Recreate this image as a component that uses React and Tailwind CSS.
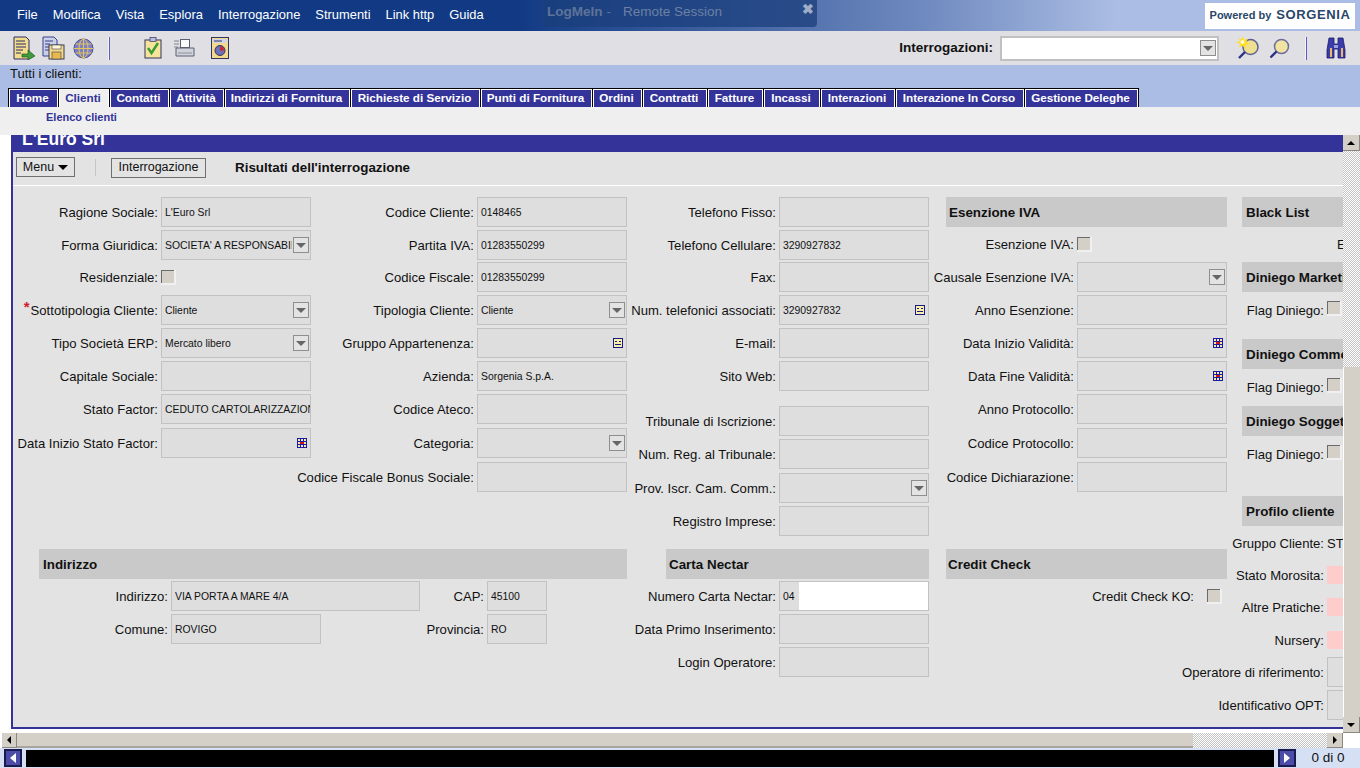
import React from "react";

const menus = ["File", "Modifica", "Vista", "Esplora", "Interrogazione", "Strumenti", "Link http", "Guida"];

const tabs = [
  { label: "Home", w: "w-[50px]" },
  { label: "Clienti", w: "w-[51px]", active: true },
  { label: "Contatti", w: "w-[60px]" },
  { label: "Attività", w: "w-[55px]" },
  { label: "Indirizzi di Fornitura", w: "w-[126px]" },
  { label: "Richieste di Servizio", w: "w-[130px]" },
  { label: "Punti di Fornitura", w: "w-[112px]" },
  { label: "Ordini", w: "w-[50px]" },
  { label: "Contratti", w: "w-[65px]" },
  { label: "Fatture", w: "w-[56px]" },
  { label: "Incassi", w: "w-[57px]" },
  { label: "Interazioni", w: "w-[75px]" },
  { label: "Interazione In Corso", w: "w-[129px]" },
  { label: "Gestione Deleghe", w: "w-[115px] border-r" },
];

const col1 = [
  { label: "Ragione Sociale:", value: "L'Euro Srl", h: "h-[33px]" },
  { label: "Forma Giuridica:", value: "SOCIETA' A RESPONSABILITA' LIMITATA", type: "select", h: "h-[32px]" },
  { label: "Residenziale:", type: "check", h: "h-[33px]" },
  { label: "Sottotipologia Cliente:", value: "Cliente", type: "select", required: true, h: "h-[33px]" },
  { label: "Tipo Società ERP:", value: "Mercato libero", type: "select", h: "h-[33px]" },
  { label: "Capitale Sociale:", h: "h-[33px]" },
  { label: "Stato Factor:", value: "CEDUTO CARTOLARIZZAZIONE", h: "h-[34px]" },
  { label: "Data Inizio Stato Factor:", type: "date", h: "h-[34px]" },
];

const col2 = [
  { label: "Codice Cliente:", value: "0148465", h: "h-[33px]" },
  { label: "Partita IVA:", value: "01283550299", h: "h-[32px]" },
  { label: "Codice Fiscale:", value: "01283550299", h: "h-[33px]" },
  { label: "Tipologia Cliente:", value: "Cliente", type: "select", h: "h-[33px]" },
  { label: "Gruppo Appartenenza:", type: "lookup", h: "h-[33px]" },
  { label: "Azienda:", value: "Sorgenia S.p.A.", h: "h-[33px]" },
  { label: "Codice Ateco:", h: "h-[34px]" },
  { label: "Categoria:", type: "select", h: "h-[34px]" },
  { label: "Codice Fiscale Bonus Sociale:", h: "h-[34px]" },
];

const col3 = [
  { label: "Telefono Fisso:", h: "h-[33px]" },
  { label: "Telefono Cellulare:", value: "3290927832", h: "h-[32px]" },
  { label: "Fax:", h: "h-[33px]" },
  { label: "Num. telefonici associati:", value: "3290927832", type: "lookup", h: "h-[33px]" },
  { label: "E-mail:", h: "h-[33px]" },
  { label: "Sito Web:", h: "h-[45px]" },
  { label: "Tribunale di Iscrizione:", h: "h-[33px]" },
  { label: "Num. Reg. al Tribunale:", h: "h-[34px]" },
  { label: "Prov. Iscr. Cam. Comm.:", type: "select", h: "h-[33px]" },
  { label: "Registro Imprese:", h: "h-[33px]" },
];

const col4 = [
  { label: "Esenzione IVA:", type: "check", h: "h-[33px]" },
  { label: "Causale Esenzione IVA:", type: "select", h: "h-[33px]" },
  { label: "Anno Esenzione:", h: "h-[33px]" },
  { label: "Data Inizio Validità:", type: "date", h: "h-[33px]" },
  { label: "Data Fine Validità:", type: "date", h: "h-[33px]" },
  { label: "Anno Protocollo:", h: "h-[34px]" },
  { label: "Codice Protocollo:", h: "h-[34px]" },
  { label: "Codice Dichiarazione:", h: "h-[33px]" },
];

const ArrowBox = () => (
  <span className="flex h-[16px] w-[16px] shrink-0 items-center justify-center border border-[#8e8e8e] bg-[#e3e3e3]">
    <span className="h-0 w-0 border-x-[5px] border-t-[5px] border-x-transparent border-t-[#666]" />
  </span>
);

const CalendarIcon = () => (
  <svg width="10" height="10" viewBox="0 0 10 10" className="shrink-0">
    <rect width="10" height="10" fill="#1a1aa8" />
    <path d="M1 1h2v2H1zM4 1h2v2H4zM7 1h2v2H7zM1 4h2v2H1zM7 4h2v2H7zM1 7h2v2H1zM4 7h2v2H4zM7 7h2v2H7z" fill="#f4e9a8" />
    <rect x="3" y="4" width="4" height="2" fill="#d4141c" />
  </svg>
);

const LookupIcon = () => (
  <svg width="10" height="10" viewBox="0 0 10 10" className="shrink-0">
    <rect x="0.5" y="0.5" width="9" height="9" fill="#f6efb0" stroke="#1a1a80" />
    <path d="M2 3h2v1H2zM6 3h2v1H6zM2 6h6v1H2z" fill="#1a1a80" />
  </svg>
);

const CheckBox = () => (
  <span className="block h-[15px] w-[15px] bg-[#f0f0f0]">
    <span className="block h-[13px] w-[13px] border-l border-t border-[#6b6b6b] bg-[#d4d0c8]" />
  </span>
);

const Field = ({ value, type, w = "w-[150px]" }) => (
  <div className={`flex h-[30px] shrink-0 items-center overflow-hidden border border-[#c2c2c2] bg-[#dedede] pl-[3px] pt-[1px] ${w}`}>
    <span className="min-w-0 flex-1 overflow-hidden whitespace-nowrap text-[10.4px] text-[#111]">{value}</span>
    {type === "select" && <span className="ml-[1px] mr-[1px] mt-[-1px]"><ArrowBox /></span>}
    {type === "date" && <span className="mr-[3px] mt-[-1px]"><CalendarIcon /></span>}
    {type === "lookup" && <span className="mr-[3px] mt-[-1px]"><LookupIcon /></span>}
  </div>
);

const Label = ({ children, w, required }) => (
  <div className={`flex h-[30px] shrink-0 items-center justify-end whitespace-nowrap pt-[1px] text-[#111] ${w}`}>
    {required && <span className="mr-[1px] mt-[-8px] text-[15px] font-bold leading-none text-[#d01c2c]">*</span>}
    {children}
  </div>
);

const Row = ({ item, w }) => (
  <div className={`flex gap-[3px] ${item.h}`}>
    <Label w={w} required={item.required}>{item.label}</Label>
    {item.type === "check" ? (
      <div className="pt-[8px]"><CheckBox /></div>
    ) : (
      <Field value={item.value} type={item.type} />
    )}
  </div>
);

const SectionHead = ({ children, className, pl = "pl-[3px]" }) => (
  <div className={`flex h-[30px] shrink-0 items-center overflow-hidden whitespace-nowrap bg-[#c9c9c9] pt-[2px] text-[13.4px] font-bold text-[#111] ${pl} ${className}`}>
    {children}
  </div>
);

const DocArrowIcon = () => (
  <svg width="24" height="24" viewBox="0 0 24 24">
    <path d="M2 1h12l3 3v19H2z" fill="#f3dc8c" stroke="#2a2a6a" />
    <path d="M4 5h9M4 8h10M4 11h10M4 14h7M4 17h5" stroke="#2a2a6a" />
    <path d="M10 18h6v-4l7 6-7 4v-3h-6z" fill="#3f9a3c" stroke="#1d5c22" strokeWidth="0.7" />
  </svg>
);

const DocsFloppyIcon = () => (
  <svg width="23" height="24" viewBox="0 0 23 24">
    <path d="M1 1h11l3 3v16H1z" fill="#c9d0ea" stroke="#3a3f8a" />
    <path d="M3 5h8M3 8h5M3 11h4M3 14h4" stroke="#3a3f8a" />
    <rect x="7" y="9" width="15" height="14" fill="#f2d98c" stroke="#3a3a50" />
    <rect x="10" y="9" width="9" height="4" fill="#fff8d8" stroke="#3a3a50" strokeWidth="0.6" />
    <rect x="10" y="16" width="9" height="7" fill="#e9b84f" stroke="#3a3a50" strokeWidth="0.6" />
  </svg>
);

const GlobeIcon = () => (
  <svg width="21" height="21" viewBox="0 0 21 21">
    <circle cx="10.5" cy="10.5" r="9.5" fill="#7d80c4" stroke="#4a4c94" />
    <ellipse cx="10.5" cy="10.5" rx="4.5" ry="9.5" fill="none" stroke="#e3c65a" />
    <path d="M10.5 1v19M1 10.5h19M2.5 6h16M2.5 15h16" stroke="#e3c65a" fill="none" />
  </svg>
);

const ClipboardIcon = () => (
  <svg width="18" height="22" viewBox="0 0 18 22">
    <rect x="1" y="3" width="16" height="18" fill="#f6e49b" stroke="#33335f" />
    <rect x="6" y="0.5" width="6" height="4" fill="#b9bde0" stroke="#33335f" strokeWidth="0.7" />
    <path d="M4 11l3.5 5L14 6" fill="none" stroke="#3a9a34" strokeWidth="2.4" />
  </svg>
);

const PrinterIcon = () => (
  <svg width="22" height="20" viewBox="0 0 22 20">
    <path d="M1 3h5M1 6h5M1 9h4" stroke="#a0a4ac" strokeWidth="1.4" />
    <rect x="7.5" y="1.5" width="9" height="8" fill="#fafafa" stroke="#5a6072" />
    <path d="M3 10h18v8H3z" fill="#d0d4da" stroke="#5a6072" />
    <path d="M5 15h14" stroke="#8a8f9c" />
  </svg>
);

const CalendarDocIcon = () => (
  <svg width="18" height="22" viewBox="0 0 18 22">
    <rect x="0.5" y="0.5" width="17" height="21" fill="#f2d98c" stroke="#33335f" />
    <rect x="2" y="2" width="14" height="4" fill="#cfd3ec" />
    <path d="M3 4h8" stroke="#33335f" />
    <circle cx="9" cy="13.5" r="5" fill="#6d6fb8" stroke="#33335f" />
    <path d="M9 13.5V9.5a4 4 0 014 4z" fill="#cf2230" />
  </svg>
);

const NewSearchIcon = () => (
  <svg width="24" height="24" viewBox="0 0 24 24">
    <circle cx="14.5" cy="11" r="7.5" fill="#efe08f" stroke="#5d6096" strokeWidth="1.5" />
    <path d="M9 16l-6 6" stroke="#2c2f86" strokeWidth="2.4" />
    <path d="M6.5 0l1.6 4 3.9-1.6L10.3 6l3.2 2.2-3.9.4-.6 3.9-2.5-3-3.3 2 .9-3.8L0 6.5l3.8-1.3-.7-3.8 2.4 2.3z" fill="#ffdf20" />
    <circle cx="6.5" cy="6" r="2" fill="#fffbe0" />
  </svg>
);

const SearchIcon = () => (
  <svg width="21" height="21" viewBox="0 0 21 21">
    <circle cx="12.5" cy="8.5" r="7" fill="#f0e4a0" stroke="#6a6da0" strokeWidth="1.5" />
    <path d="M7.5 13.5L1.5 19.5" stroke="#2c2f86" strokeWidth="2.4" />
  </svg>
);

const BinocularsIcon = () => (
  <svg width="20" height="23" viewBox="0 0 20 23">
    <path d="M3 1h5v6h4V1h5l2 12v8h-7v-9H8v9H1v-8z" fill="#3a3ca8" stroke="#1b1b70" strokeWidth="0.8" />
    <path d="M4 11h2v9H4zM15 11h2v9h-2z" fill="#e8b868" />
    <path d="M8 8h4v3H8z" fill="#9ea2dc" />
  </svg>
);

const ToolbarSep = ({ className }) => (
  <span className={`h-[23px] w-[2px] shrink-0 border-r border-[#5a5cc0] bg-[#f4f4f8] ${className}`} />
);

const ScrollBtn = ({ dir, className }) => (
  <div className={`flex shrink-0 items-center justify-center border-r border-b border-[#8a8780] bg-[#d4d0c8] ${className}`}>
    {dir === "up" && <span className="h-0 w-0 border-x-[4px] border-b-[4px] border-x-transparent border-b-black" />}
    {dir === "down" && <span className="h-0 w-0 border-x-[4px] border-t-[4px] border-x-transparent border-t-black" />}
    {dir === "left" && <span className="h-0 w-0 border-y-[4px] border-r-[4px] border-y-transparent border-r-black" />}
    {dir === "right" && <span className="h-0 w-0 border-y-[4px] border-l-[4px] border-y-transparent border-l-black" />}
  </div>
);

const PageBtn = ({ dir }) => (
  <div className="flex h-[18px] w-[18px] shrink-0 items-center justify-center border-2 border-[#1a1a50] bg-[#4a4ca8]">
    {dir === "left" ? (
      <span className="h-0 w-0 border-y-[5px] border-r-[6px] border-y-transparent border-r-white" />
    ) : (
      <span className="h-0 w-0 border-y-[5px] border-l-[6px] border-y-transparent border-l-white" />
    )}
  </div>
);

const dither = "bg-[repeating-conic-gradient(#c4c4c4_0_25%,#ffffff_0_50%)] bg-[length:2px_2px]";

export default function App() {
  return (
    <div className="h-[768px] w-[1360px] overflow-hidden bg-white font-['Liberation_Sans',Arial,sans-serif] text-[13.1px]">
      {/* barra menu */}
      <div className="relative flex h-[31px] items-center justify-between bg-[linear-gradient(90deg,#123a84_0%,#123a84_38%,#6f8abf_68%,#abbde4_82%,#abbde4_100%)] pl-[17px] pr-[5px]">
        <div className="flex gap-[15px] pb-[1px] text-[12.9px] text-white">
          {menus.map((m) => (
            <span key={m}>{m}</span>
          ))}
        </div>
        <div className="flex h-[26px] w-[150px] items-center justify-center gap-[5px] whitespace-nowrap bg-white pb-[1px]">
          <span className="text-[11px] font-bold text-[#2a4668]">Powered by</span>
          <span className="text-[13px] font-bold tracking-[0.6px] text-[#2a4668]">SORGENIA</span>
        </div>
        <div className="absolute left-[543px] top-0 flex h-[27px] w-[274px] items-center rounded-b-[4px] bg-[#1b3f7c]/75 pb-[2px] pl-[4px] text-[13.5px]">
          <span className="font-bold text-[#5f7399]">LogMeIn</span>
          <span className="ml-[4px] text-[#5f7399]">-</span>
          <span className="ml-[12px] text-[#6d80a4]">Remote Session</span>
          <span className="absolute right-[3px] top-[-1px] text-[14px] font-bold text-[#9fadc6]">✖</span>
        </div>
      </div>

      {/* barra strumenti */}
      <div className="flex h-[34px] items-center bg-[#e0dfe4] pl-[12px]">
        <DocArrowIcon />
        <span className="ml-[6px]"><DocsFloppyIcon /></span>
        <span className="ml-[8px]"><GlobeIcon /></span>
        <ToolbarSep className="ml-[14px]" />
        <span className="ml-[34px]"><ClipboardIcon /></span>
        <span className="ml-[11px]"><PrinterIcon /></span>
        <span className="ml-[16px]"><CalendarDocIcon /></span>
        <span className="ml-auto whitespace-nowrap text-[13.5px] font-bold text-[#111]">Interrogazioni:</span>
        <div className="ml-[7px] flex h-[25px] w-[219px] items-center justify-end border-2 border-[#c0c0c0] bg-white pr-[1px]">
          <ArrowBox />
        </div>
        <span className="ml-[17px]"><NewSearchIcon /></span>
        <span className="ml-[9px]"><SearchIcon /></span>
        <ToolbarSep className="ml-[15px]" />
        <span className="ml-[19px] mr-[14px]"><BinocularsIcon /></span>
      </div>

      {/* schede */}
      <div className="flex h-[42px] flex-col justify-between bg-[#abbde4]">
        <div className="pl-[10px] pt-[1px] text-[13px] leading-[16px] text-[#111]">Tutti i clienti:</div>
        <div className="flex pl-[8px]">
          {tabs.map((t) => (
            <div key={t.label} className={`h-[19px] shrink-0 border-l border-t border-black ${t.w}`}>
              <div
                className={`flex h-[18px] items-center justify-center whitespace-nowrap border-x border-t border-white pb-[1px] pr-[2px] text-[11.7px] font-bold ${
                  t.active ? "bg-[#efefef] text-[#333399]" : "bg-[#333399] text-white"
                }`}
              >
                {t.label}
              </div>
            </div>
          ))}
        </div>
      </div>
      <div className="h-[28px] bg-[#efefef] pl-[46px] pt-[3px] text-[11px] font-bold leading-[14px] text-[#333399]">Elenco clienti</div>

      <div className="flex h-[598px]">
        <div className="w-[1343px] shrink-0 overflow-hidden pl-[11px]">
          <div className="h-[594px] w-[1340px] border-b-2 border-l-2 border-[#333399] bg-[#e3e3e3]">
            <div className="h-[17px] overflow-hidden bg-[#333399] pl-[9px] text-[17.5px] font-bold leading-[9px] text-white">L'Euro Srl</div>

            {/* barra azioni */}
            <div className="flex h-[34px] items-center border-b border-white pb-[3px] pl-[3px] text-[12.5px] text-[#111]">
              <div className="flex h-[20px] w-[59px] items-center justify-center gap-[4px] border border-[#6f6f6f]">
                Menu
                <span className="h-0 w-0 border-x-[5px] border-t-[5px] border-x-transparent border-t-black" />
              </div>
              <span className="ml-[20px] h-[17px] w-px bg-[#c5c5c5]" />
              <div className="ml-[15px] mt-[1px] flex h-[20px] w-[95px] items-center justify-center border border-[#6f6f6f]">Interrogazione</div>
              <span className="ml-[29px] mt-[3px] text-[13.4px] font-bold">Risultati dell'interrogazione</span>
            </div>

            <div className="flex">
              <div className="w-[1229px] shrink-0">
                {/* colonne superiori */}
                <div className="flex h-[363px] pt-[11px]">
                  <div className="w-[298px] shrink-0">
                    {col1.map((it) => <Row key={it.label} item={it} w="w-[145px]" />)}
                  </div>
                  <div className="w-[316px] shrink-0">
                    {col2.map((it) => <Row key={it.label} item={it} w="w-[163px]" />)}
                  </div>
                  <div className="w-[302px] shrink-0">
                    {col3.map((it) => <Row key={it.label} item={it} w="w-[149px]" />)}
                  </div>
                  <div className="w-[298px] shrink-0">
                    <SectionHead className="ml-[17px] mb-[2px] w-[281px]">Esenzione IVA</SectionHead>
                    {col4.map((it) => <Row key={it.label} item={it} w="w-[145px]" />)}
                  </div>
                </div>

                {/* sezioni inferiori */}
                <div className="flex">
                  <div className="w-[614px] shrink-0">
                    <SectionHead pl="pl-[4px]" className="ml-[26px] mb-[2px] w-[588px]">Indirizzo</SectionHead>
                    <div className="flex h-[33px] gap-[3px]">
                      <Label w="w-[155px]">Indirizzo:</Label>
                      <Field value="VIA PORTA A MARE 4/A" w="w-[249px]" />
                      <Label w="w-[61px]">CAP:</Label>
                      <Field value="45100" w="w-[60px]" />
                    </div>
                    <div className="flex h-[33px] gap-[3px]">
                      <Label w="w-[155px]">Comune:</Label>
                      <Field value="ROVIGO" />
                      <Label w="w-[160px]">Provincia:</Label>
                      <Field value="RO" w="w-[60px]" />
                    </div>
                  </div>
                  <div className="w-[302px] shrink-0">
                    <SectionHead className="ml-[39px] mb-[2px] w-[263px]">Carta Nectar</SectionHead>
                    <div className="flex h-[33px] gap-[3px]">
                      <Label w="w-[149px]">Numero Carta Nectar:</Label>
                      <div className="flex h-[30px] w-[150px] border border-[#c2c2c2] bg-[#dedede]">
                        <span className="flex w-[19px] items-center pl-[3px] pt-[1px] text-[10.4px] text-[#111]">04</span>
                        <span className="flex-1 bg-white" />
                      </div>
                    </div>
                    <div className="flex h-[33px] gap-[3px]">
                      <Label w="w-[149px]">Data Primo Inserimento:</Label>
                      <Field />
                    </div>
                    <div className="flex h-[33px] gap-[3px]">
                      <Label w="w-[149px]">Login Operatore:</Label>
                      <Field />
                    </div>
                  </div>
                  <div className="w-[298px] shrink-0">
                    <SectionHead pl="pl-[2px]" className="ml-[17px] mb-[2px] w-[281px]">Credit Check</SectionHead>
                    <div className="flex h-[30px] items-center">
                      <Label w="w-[265px]">Credit Check KO:</Label>
                      <span className="ml-[13px]"><CheckBox /></span>
                    </div>
                  </div>
                </div>
              </div>

              {/* colonna destra tagliata */}
              <div className="w-[100px] shrink-0 pt-[11px]">
                <SectionHead pl="pl-[4px]" className="w-[101px]">Black List</SectionHead>
                <div className="flex h-[34px] items-center justify-end whitespace-nowrap pt-[1px] text-[#111]"><span className="mr-[-1px] w-[6px] overflow-hidden">E</span></div>
                <SectionHead pl="pl-[4px]" className="mt-[1px] w-[101px]">Diniego Marketing</SectionHead>
                <FlagRow h="h-[36px]" />
                <SectionHead pl="pl-[4px]" className="mt-[11px] w-[101px]">Diniego Commerciale</SectionHead>
                <FlagRow h="h-[36px]" />
                <SectionHead pl="pl-[4px]" className="mt-[1px] w-[101px]">Diniego Soggetto</SectionHead>
                <FlagRow h="h-[36px]" />
                <SectionHead pl="pl-[4px]" className="mt-[24px] w-[101px]">Profilo cliente</SectionHead>
                <RightRow label="Gruppo Cliente:" h="h-[34px]"><span className="block pt-[1px] text-[#111]">ST</span></RightRow>
                <RightRow label="Stato Morosita:" h="h-[30px]"><span className="block h-[18px] w-[16px] bg-[#ffcccc]" /></RightRow>
                <RightRow label="Altre Pratiche:" h="h-[34px]"><span className="block h-[18px] w-[16px] bg-[#ffcccc]" /></RightRow>
                <RightRow label="Nursery:" h="h-[32px]"><span className="block h-[18px] w-[16px] bg-[#ffcccc]" /></RightRow>
                <RightRow label="Operatore di riferimento:" h="mt-[1px] h-[30px]"><span className="block h-[30px] w-[16px] border-y border-l border-[#c2c2c2] bg-[#dedede]" /></RightRow>
                <RightRow label="Identificativo OPT:" h="mt-[3px] h-[30px]"><span className="block h-[30px] w-[16px] border-y border-l border-[#c2c2c2] bg-[#dedede]" /></RightRow>
              </div>
            </div>
          </div>
        </div>

        {/* scrollbar verticale */}
        <div className="flex w-[17px] shrink-0 flex-col">
          <ScrollBtn dir="up" className="h-[16px]" />
          <div className={`h-[216px] ${dither}`} />
          <div className="h-[350px] border-l border-white bg-[#d4d0c8]" />
          <ScrollBtn dir="down" className="h-[16px]" />
        </div>
      </div>

      {/* scrollbar orizzontale */}
      <div className="flex h-[15px] pl-[2px]">
        <ScrollBtn dir="left" className="w-[15px]" />
        <div className="w-[1176px] border-b-2 border-[#a8a59e] bg-[#d4d0c8]" />
        <div className={`w-[134px] ${dither}`} />
        <ScrollBtn dir="right" className="w-[16px]" />
      </div>

      {/* paginazione */}
      <div className="flex h-[20px] items-center bg-[#d5e0f5] pl-[4px]">
        <PageBtn dir="left" />
        <div className="ml-[4px] h-[17px] w-[1248px] bg-black" />
        <span className="ml-[4px]"><PageBtn dir="right" /></span>
        <span className="flex-1 text-center text-[13.5px] text-[#111]">0 di 0</span>
      </div>
    </div>
  );
}

function FlagRow({ h }) {
  return (
    <div className={`flex items-center pt-[1px] ${h}`}>
      <div className="flex w-[82px] justify-end whitespace-nowrap text-[#111]">Flag Diniego:</div>
      <span className="ml-[3px] mt-[-5px]"><CheckBox /></span>
    </div>
  );
}

function RightRow({ label, h, children }) {
  return (
    <div className={`flex items-center ${h}`}>
      <div className="flex w-[82px] shrink-0 justify-end whitespace-nowrap pt-[1px] text-[#111]">{label}</div>
      <span className="ml-[3px]">{children}</span>
    </div>
  );
}
